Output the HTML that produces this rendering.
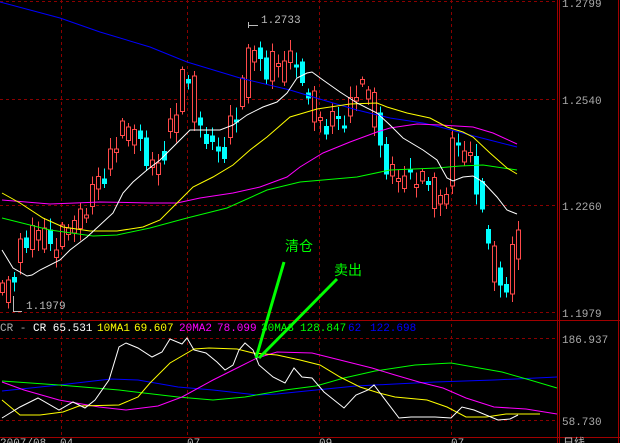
<!DOCTYPE html>
<html><head><meta charset="utf-8">
<style>
html,body{margin:0;padding:0;background:#000;overflow:hidden}
svg{display:block}
text{font-family:"Liberation Mono","DejaVu Sans Mono",monospace;font-size:11px}
</style></head>
<body>
<svg id="s" width="620" height="443" viewBox="0 0 620 443" xmlns="http://www.w3.org/2000/svg" shape-rendering="crispEdges">
<rect width="620" height="443" fill="#000"/>
<g stroke="#8a0000" stroke-dasharray="3,3" stroke-width="1">
<line x1="0" y1="1.5" x2="557" y2="1.5"/>
<line x1="0" y1="99.5" x2="557" y2="99.5"/>
<line x1="0" y1="205.5" x2="557" y2="205.5"/>
<line x1="0" y1="312.5" x2="557" y2="312.5"/>
<line x1="0" y1="338.5" x2="557" y2="338.5"/>
<line x1="0" y1="420.5" x2="557" y2="420.5"/>
<line x1="61.5" y1="0" x2="61.5" y2="437"/>
<line x1="187.5" y1="0" x2="187.5" y2="437"/>
<line x1="319.5" y1="0" x2="319.5" y2="437"/>
<line x1="451.5" y1="0" x2="451.5" y2="437"/>
</g>
<g stroke="#a00000" stroke-width="1">
<line x1="557.5" y1="0" x2="557.5" y2="443"/>
<line x1="559.5" y1="0" x2="559.5" y2="443"/>
<line x1="618.5" y1="0" x2="618.5" y2="443"/>
<line x1="0" y1="320.5" x2="620" y2="320.5"/>
<line x1="0" y1="437.5" x2="620" y2="437.5"/>
</g>
<g id="candles"></g>
<g fill="none" stroke-width="1" shape-rendering="auto">
<polyline stroke="#0000ff" points="0,2 60,18 100,32 150,47 187,62 240,78 290,90 323,100 357,110 390,118 423,123 440,127 470,135 517,147"/>
<polyline stroke="#00ff00" points="2,218 50,230 93,236 117,235 150,228 187,218 227,208 267,190 300,182 323,180 357,177 390,170 437,168 460,166 483,165 517,170"/>
<polyline stroke="#ff00ff" points="2,200 50,204 100,202 150,203 177,203 200,198 233,193 260,187 287,177 300,167 323,153 350,142 377,132 390,128 417,124 440,125 473,127 493,133 517,144"/>
<polyline stroke="#ffff00" points="2,193 20,203 43,218 63,227 90,231 117,231 143,227 160,220 177,203 193,187 213,177 233,165 250,150 267,137 290,117 317,109 350,104 377,103 387,107 407,113 430,118 447,127 463,132 473,137 490,153 507,168 517,174"/>
<polyline stroke="#ffffff" points="2,250 13,268 27,276 32,275 40,270 60,260 70,250 87,237 100,225 113,213 123,193 133,182 147,170 160,160 177,143 190,130 220,130 233,125 247,115 263,107 277,102 287,93 297,78 307,73 312,72 323,80 340,92 357,103 377,113 390,125 403,138 423,150 437,160 447,178 453,181 463,177 473,176 483,182 497,197 507,210 517,214"/>
<polyline stroke="#0000ff" points="2,391 59,385 111,379 138,380 178,387 213,390 257,395 277,394 316,390 356,386 395,384 435,382 494,380 557,377"/>
<polyline stroke="#00ff00" points="2,381 59,385 119,390 178,397 213,400 245,397 285,390 316,386 344,378 375,371 415,365 451,363 502,372 530,380 557,388"/>
<polyline stroke="#ff00ff" points="2,382 24,390 59,400 99,407 126,410 158,406 182,397 213,380 237,368 257,358 277,352 312,353 340,360 372,368 395,375 419,382 443,388 466,398 494,407 526,409 557,414"/>
<polyline stroke="#ffff00" points="2,400 20,415 40,415 63,412 79,406 119,405 138,397 150,383 170,363 194,349 209,348 237,349 253,353 277,355 300,360 320,365 340,377 360,387 379,393 395,397 427,400 447,407 466,417 486,417 506,414 540,414"/>
<polyline stroke="#ffffff" points="2,418 20,407 38,398 59,410 73,402 85,408 95,400 109,380 119,347 126,343 138,348 152,357 162,352 170,339 182,344 187,338 194,350 206,353 217,362 225,370 233,365 239,350 245,343 253,350 259,365 273,377 285,383 294,368 302,377 312,378 324,392 344,408 356,395 368,390 374,385 399,418 411,417 435,417 451,418 462,407 474,410 498,420 510,419 518,415"/>
</g>
<g stroke="#00ff00" stroke-width="3" shape-rendering="auto">
<line x1="284" y1="262" x2="256" y2="358"/>
<line x1="337" y1="279" x2="259" y2="358"/>
</g>
<text x="285" y="251" fill="#00ff00" style="font-family:'Liberation Sans','WenQuanYi Zen Hei','Noto Sans CJK SC',sans-serif;font-size:14px">清仓</text>
<text x="334" y="275" fill="#00ff00" style="font-family:'Liberation Sans','WenQuanYi Zen Hei','Noto Sans CJK SC',sans-serif;font-size:14px">卖出</text>
<g fill="#bbbbbb">
<text x="261" y="23">1.2733</text>
<text x="26" y="309">1.1979</text>
</g>
<g stroke="#bbbbbb" stroke-width="1"><line x1="249" y1="25.5" x2="258" y2="25.5"/><line x1="248.5" y1="22" x2="248.5" y2="28"/><line x1="13.5" y1="296" x2="13.5" y2="312"/><line x1="13" y1="311.5" x2="22" y2="311.5"/></g>
<g fill="#aaaaaa">
<text x="562" y="7">1.2799</text>
<text x="562" y="104">1.2540</text>
<text x="562" y="210">1.2260</text>
<text x="562" y="317">1.1979</text>
<text x="562" y="343">186.937</text>
<text x="562" y="425">58.730</text>
</g>
<text x="0" y="331" xml:space="preserve"><tspan fill="#aaaaaa">CR -</tspan><tspan x="33" fill="#ffffff">CR 65.531</tspan><tspan x="97" fill="#ffff00">10MA1</tspan><tspan x="134" fill="#ffff00">69.607</tspan><tspan x="179" fill="#ff00ff">20MA2</tspan><tspan x="217" fill="#ff00ff">78.099</tspan><tspan x="261" fill="#00ff00">30MA3</tspan><tspan x="300" fill="#00ff00">128.847</tspan><tspan x="348" fill="#0000ff">62</tspan><tspan x="370" fill="#0000ff">122.698</tspan></text>
<g fill="#bbbbbb" font-size="9"><text x="0" y="446">2007/08</text><text x="60" y="446">04</text><text x="187" y="446">07</text><text x="319" y="446">09</text><text x="451" y="446">07</text><text x="563" y="446">日线</text></g>
</svg>
<script>
(function(){
var P=[[2,295],[14,265],[20,245],[30,240],[40,228],[50,250],[60,240],[70,225],[80,215],[90,205],[96,180],[102,170],[110,155],[120,135],[130,125],[140,145],[150,170],[155,175],[165,135],[175,115],[180,85],[186,75],[192,100],[198,130],[205,135],[210,150],[215,160],[222,140],[228,125],[235,115],[240,110],[245,60],[250,40],[256,55],[262,70],[268,75],[275,55],[282,75],[288,60],[295,50],[300,95],[306,95],[312,105],[318,120],[324,130],[330,125],[336,120],[342,115],[348,110],[354,90],[360,95],[366,85],[372,100],[378,145],[384,165],[390,175],[396,180],[402,175],[408,180],[414,175],[420,185],[426,180],[432,195],[438,200],[444,205],[450,155],[456,140],[462,150],[468,150],[474,175],[480,215],[486,235],[492,260],[498,290],[504,295],[510,270],[516,230]];
function f(x){for(var i=0;i<P.length-1;i++){if(x<=P[i+1][0]){var t=(x-P[i][0])/(P[i+1][0]-P[i][0]);return P[i][1]+t*(P[i+1][1]-P[i][1]);}}return P[P.length-1][1];}
var g=document.getElementById('candles'),h='';
var prev=300;
for(var i=0;i<=86;i++){var x=2+6*i;if(x>518)break;var c=f(x)+((i*7)%5-2)*6;var o=prev+((i*3)%4-1.5)*5;
if(i%5==2){var t=o;o=c;c=t;}
var bt=Math.min(o,c),bb=Math.max(o,c);if(bb-bt<3)bb=bt+3;
var hi=bt-3-(i*11)%10,lo=bb+3+(i*13)%10;
if(c<o){h+='<line x1="'+(x+.5)+'" y1="'+hi+'" x2="'+(x+.5)+'" y2="'+lo+'" stroke="#ff4a4a"/>';
h+='<rect x="'+(x-1.5)+'" y="'+bt+'" width="4" height="'+(bb-bt)+'" fill="#000" stroke="#ff4a4a"/>';}
else{h+='<line x1="'+(x+.5)+'" y1="'+hi+'" x2="'+(x+.5)+'" y2="'+lo+'" stroke="#00ffff"/>';
h+='<rect x="'+(x-2)+'" y="'+bt+'" width="5" height="'+(bb-bt)+'" fill="#00ffff"/>';}
prev=f(x);}
g.innerHTML=h;
})();
</script>
</body></html>
